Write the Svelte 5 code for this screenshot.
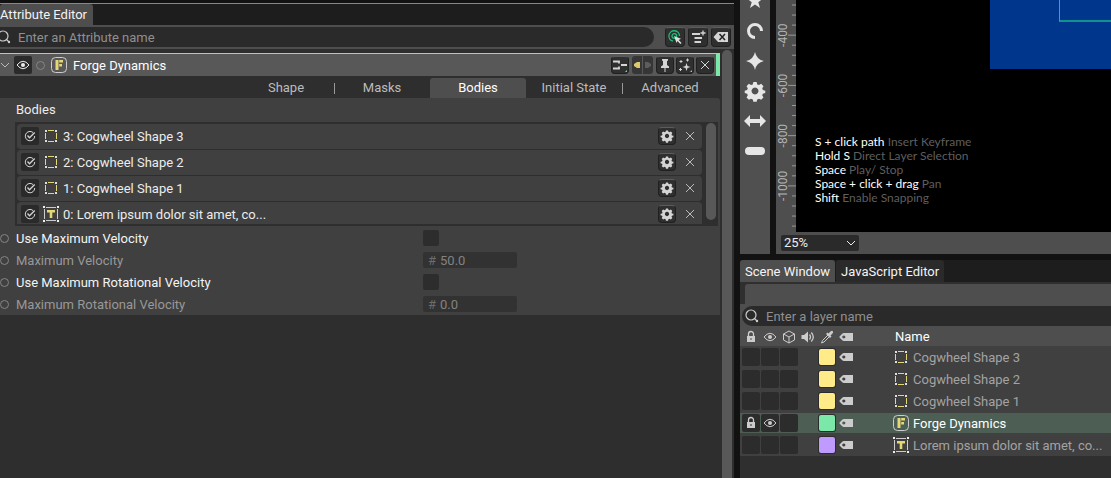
<script lang="ts">
  type Kind = 'shape' | 'text' | 'forge';

  interface Layer {
    name: string;
    kind: Kind;
    color: string;
    selected?: boolean;
  }

  const tabs = ['Shape', 'Masks', 'Bodies', 'Initial State', 'Advanced'];
  let activeTab = $state('Bodies');

  const bodies: { name: string; kind: Kind }[] = [
    { name: '3: Cogwheel Shape 3', kind: 'shape' },
    { name: '2: Cogwheel Shape 2', kind: 'shape' },
    { name: '1: Cogwheel Shape 1', kind: 'shape' },
    { name: '0: Lorem ipsum dolor sit amet, co...', kind: 'text' }
  ];

  const layers: Layer[] = [
    { name: 'Cogwheel Shape 3', kind: 'shape', color: '#ffeb87' },
    { name: 'Cogwheel Shape 2', kind: 'shape', color: '#ffeb87' },
    { name: 'Cogwheel Shape 1', kind: 'shape', color: '#ffeb87' },
    { name: 'Forge Dynamics', kind: 'forge', color: '#7be8a9', selected: true },
    { name: 'Lorem ipsum dolor sit amet, co...', kind: 'text', color: '#c09bff' }
  ];

  const hints = [
    ['S + click path', 'Insert Keyframe'],
    ['Hold S', 'Direct Layer Selection'],
    ['Space', 'Play/ Stop'],
    ['Space + click + drag', 'Pan'],
    ['Shift', 'Enable Snapping']
  ];

  const tools = ['star', 'arc', 'sparkle', 'gear', 'arrows', 'pill'];
  const columns = ['lock', 'eye', 'cube', 'audio', 'dropper', 'tag'];

  // One minor tick every 40 units, one label every 200
  const ticks = Array.from({ length: 23 }, (_, i) => ({
    y: 5 + i * 10.05,
    label: (i - 3) % 5 === 0 && i >= 3 ? String(-400 - ((i - 3) / 5) * 200) : ''
  }));

  const gear =
    'M-1.4-7.6h2.8l.5 2 1.5.6 1.8-1.1 2 2-1.1 1.8.6 1.5 2 .5v2l-2 .6-.6 1.4 1.1 1.8-2 2-1.8-1-1.5.6-.5 2h-2.8l-.5-2-1.5-.6-1.8 1-2-2 1.1-1.8-.6-1.4-2-.6v-2l2-.5.6-1.5-1.1-1.8 2-2 1.8 1.1 1.5-.6zM0-2.9a2.9 2.9 0 1 0 .01 0z';
</script>

{#snippet icon(name: string)}
  <svg class="icon" width="16" height="16" viewBox="0 0 16 16" aria-hidden="true">
    {#if name === 'shape'}
      <path d="M5 2.5h6M5 13.5h6M2.5 5v6M13.5 5v6" stroke="#e5d774" fill="none" />
      <path d="M2 2h2v2H2zM12 2h2v2h-2zM2 12h2v2H2zM12 12h2v2h-2z" fill="#ddd" />
    {:else if name === 'text'}
      <path d="M3 1.5h10M3 14.5h10M1.5 3v10M14.5 3v10" stroke="#ccc" fill="none" />
      <path d="M0 0h2v2H0zM14 0h2v2h-2zM0 14h2v2H0zM14 14h2v2h-2z" fill="#eee" />
      <path d="M4 4h8v2.5H9.3V12H6.7V6.5H4z" fill="#e5d774" />
    {:else if name === 'forge'}
      <rect x=".5" y=".5" width="15" height="15" rx="4" fill="none" stroke="#ccc" />
      <path d="M4.5 3h3v10h-3zM8.2 3H12v2.500H8.200zM8.200 7H11v2.500H8.200z" fill="#e5d774" />
    {:else if name === 'eye'}
      <path d="M2 8q6-7.5 12 0q-6 7.5-12 0z" fill="none" stroke="currentColor" />
      <circle cx="8" cy="8" r="2" fill="currentColor" />
    {:else if name === 'lock'}
      <path d="M5.5 7V5a2.5 2.5 0 0 1 5 0v2" fill="none" stroke="currentColor" stroke-width="1.3" />
      <path fill-rule="evenodd" d="M4 7h8v6H4zM7.5 9v2h1V9z" fill="currentColor" />
    {:else if name === 'cube'}
      <path d="M8 2l5.5 3v6L8 14l-5.5-3V5zM2.5 5L8 8l5.5-3M8 8v6" fill="none" stroke="currentColor" />
    {:else if name === 'audio'}
      <path d="M1.5 6h2.5l4-3.5v11L4 10H1.5z" fill="currentColor" />
      <path d="M9.5 5.5q2 2.5 0 5M11.3 3.5q4 4.5 0 9" fill="none" stroke="currentColor" stroke-width="1.3" />
    {:else if name === 'dropper'}
      <path d="M9 6L3.5 11.5 2.5 14l2.5-1L10.5 7.5" fill="none" stroke="currentColor" />
      <path d="M7 5l1.5-1.5 1 1L11.500 2.500q1.500-1.200 2.300-.3t-.3 2.300L11.500 6.500l1 1L11 9z" fill="currentColor" />
    {:else if name === 'tag'}
      <path
        fill-rule="evenodd"
        d="M6 4h9v8H6q-1.200 0-2-1L1.500 8.500v-1L4 5q.8-1 2-1zM5.800 6.400a1.600 1.600 0 1 0 .01 0z"
        fill="currentColor"
      />
    {:else if name === 'check'}
      <path d="M11 4.500A4.700 4.700 0 1 0 12.700 8" fill="none" stroke="currentColor" />
      <path d="M5.500 7.500L7.500 9.700L12.700 4.500" fill="none" stroke="currentColor" stroke-width="1.300" />
    {:else if name === 'gear'}
      <path transform="translate(8 8) scale(.74)" fill-rule="evenodd" d={gear} fill="currentColor" />
    {:else if name === 'close'}
      <path d="M4 4l8 8M12 4l-8 8" stroke="currentColor" />
    {:else if name === 'chevron'}
      <path d="M4 6l4 4 4-4" fill="none" stroke="currentColor" />
    {:else if name === 'search'}
      <circle cx="7" cy="7" r="5" fill="none" stroke="currentColor" stroke-width="1.200" />
      <path d="M10.500 10.500l3 3" stroke="currentColor" stroke-width="1.200" />
      <circle cx="13" cy="13" r="1.200" fill="currentColor" />
    {:else if name === 'target'}
      <path d="M12.500 7A5.300 5.300 0 1 0 6 12.200" fill="none" stroke="#1fbf7a" stroke-width="1.300" />
      <circle cx="7.300" cy="7" r="2.300" fill="none" stroke="#1fbf7a" stroke-width="1.300" />
      <path d="M7 7l7 2.700-2.300 1.200 2.800 3-1.200 1.100-2.800-3L9.500 14z" fill="#ddd" />
    {:else if name === 'levels'}
      <path d="M2 4h8v2H2zM4.500 8H12v2H4.500zM4.500 12H11v2H4.500z" fill="currentColor" />
      <path d="M13 1.500v5M10.500 4h5" stroke="currentColor" stroke-width="1.300" />
    {:else if name === 'erase'}
      <path d="M5 3h10v10H5L.5 8z" fill="currentColor" />
      <path d="M6.500 5l5.500 6M12 5l-5.500 6" stroke="#222" stroke-width="1.500" />
    {:else if name === 'connect'}
      <path d="M1 4.500h6v2M1 11.500h6v-2" fill="none" stroke="currentColor" stroke-width="1.800" />
      <path d="M9 7h6v2H9z" fill="currentColor" />
    {:else if name === 'pin'}
      <path d="M5 2h6v1.500l-1 .5v4l2 1.500V11H4V9.500L6 8V4l-1-.5zM7.500 11h1v4h-1z" fill="currentColor" />
    {:else if name === 'sparkles'}
      <path d="M9.500 6l1 3 3 1-3 1-1 3-1-3-3-1 3-1z" fill="currentColor" />
      <path d="M4 3v3M2.500 4.500h3M10.500 1.500v3M9 3h3M3.500 11v3M2 12.500h3" stroke="currentColor" />
    {/if}
  </svg>
{/snippet}

{#snippet tool(name: string)}
  <svg width="22" height="22" viewBox="-11 -11 22 22" fill="#e6e6e6" aria-hidden="true">
    {#if name === 'star'}
      <path d="M0-8L2-2.500H8L3.300 1.300 5 7 0 3.500-5 7-3.300 1.300-8-2.500H-2z" />
    {:else if name === 'arc'}
      <path d="M6.500 0A6.500 6.500 0 1 0 0 6.500" fill="none" stroke="#e6e6e6" stroke-width="3" />
    {:else if name === 'sparkle'}
      <path d="M0-9Q1.500-1.500 9 0 1.500 1.500 0 9-1.500 1.500-9 0-1.500-1.500 0-9z" />
    {:else if name === 'gear'}
      <path transform="scale(1.180)" fill-rule="evenodd" d={gear} />
    {:else if name === 'arrows'}
      <path d="M-11 0l6-6v4H5v-4l6 6-6 6V2H-5v4z" />
    {:else}
      <rect x="-10" y="-4" width="20" height="8" rx="4" />
    {/if}
  </svg>
{/snippet}

<div class="app">
  <section class="attributes">
    <div class="strip">
      <button class="strip-tab active">Attribute Editor</button>
    </div>

    <div class="attr-search">
      <label class="field">
        {@render icon('search')}
        <input type="text" placeholder="Enter an Attribute name" aria-label="Attribute name" />
      </label>
      <div class="search-actions">
        <button class="tool-btn large" aria-label="Pick target">{@render icon('target')}</button>
        <button class="tool-btn large" aria-label="Add level">{@render icon('levels')}</button>
        <button class="tool-btn large" aria-label="Clear">{@render icon('erase')}</button>
      </div>
    </div>

    <div class="scroll-area">
      <div class="panel">
        <header class="panel-head">
          <button class="bare" aria-label="Collapse">{@render icon('chevron')}</button>
          <button class="square" aria-label="Visibility">{@render icon('eye')}</button>
          <span class="ring"></span>
          {@render icon('forge')}
          <h2>Forge Dynamics</h2>
          <div class="head-actions">
            <button class="tool-btn corner" aria-label="Connections">{@render icon('connect')}</button>
            <span class="keys">
              <button aria-label="Previous key">
                <svg width="8" height="8" viewBox="0 0 8 8"><path d="M7 1v6H4L1 5V3l3-2z" fill="#dcc86c" /></svg>
              </button>
              <button aria-label="Next key">
                <svg width="8" height="8" viewBox="0 0 8 8"><path d="M1 1v6h3l3-2V3L4 1z" fill="#5d5d5d" /></svg>
              </button>
            </span>
            <button class="tool-btn" aria-label="Pin">{@render icon('pin')}</button>
            <button class="tool-btn corner" aria-label="Presets">{@render icon('sparkles')}</button>
            <button class="tool-btn" aria-label="Close">{@render icon('close')}</button>
          </div>
        </header>

        <nav class="tabs">
          {#each tabs as tab, i}
            <button
              class:active={tab === activeTab}
              class:divided={i === 1 || i === 4}
              onclick={() => (activeTab = tab)}>{tab}</button>
          {/each}
        </nav>

        <div class="content">
          <h3>Bodies</h3>
          <div class="list">
            <ul>
              {#each bodies as body}
                <li>
                  <button class="square" aria-label="Enabled">{@render icon('check')}</button>
                  {@render icon(body.kind)}
                  <span class="body-name">{body.name}</span>
                  <button class="tool-btn" aria-label="Settings">{@render icon('gear')}</button>
                  <button class="bare" aria-label="Remove">{@render icon('close')}</button>
                </li>
              {/each}
            </ul>
            <div class="thumb"></div>
          </div>

          <div class="attr">
            <span class="ring"></span>
            <label for="use-max">Use Maximum Velocity</label>
            <input id="use-max" type="checkbox" />
          </div>
          <div class="attr off">
            <span class="ring"></span>
            <label for="max">Maximum Velocity</label>
            <div class="number"><span>#</span><input id="max" type="text" value="50.0" disabled /></div>
          </div>
          <div class="attr">
            <span class="ring"></span>
            <label for="use-max-rot">Use Maximum Rotational Velocity</label>
            <input id="use-max-rot" type="checkbox" />
          </div>
          <div class="attr off">
            <span class="ring"></span>
            <label for="max-rot">Maximum Rotational Velocity</label>
            <div class="number"><span>#</span><input id="max-rot" type="text" value="0.0" disabled /></div>
          </div>
        </div>
      </div>
      <div class="scrollbar"></div>
    </div>
  </section>

  <div class="side">
    <section class="viewer">
      <div class="toolbar">
        {#each tools as name}
          <button aria-label={name}>{@render tool(name)}</button>
        {/each}
      </div>
      <div class="viewport">
        <div class="stage">
          <svg class="ruler" width="20" height="232" viewBox="0 0 20 232">
            {#each ticks as tick}
              <path d="M{tick.label ? 12 : 16} {tick.y}H20" stroke="#999" />
              {#if tick.label}
                <text transform="translate(11 {tick.y}) rotate(-90)" text-anchor="middle">{tick.label}</text>
              {/if}
            {/each}
          </svg>
          <div class="canvas">
            <div class="backdrop"><div class="outline"></div></div>
            <div class="hints">
              {#each hints as [keys, action]}
                <div><b>{keys}</b> {action}</div>
              {/each}
            </div>
          </div>
        </div>
        <div class="zoom-bar">
          <label class="zoom">
            <select aria-label="Zoom">
              <option>25%</option>
            </select>
            {@render icon('chevron')}
          </label>
        </div>
      </div>
    </section>

    <section class="scene">
      <div class="strip">
        <button class="strip-tab active">Scene Window</button>
        <button class="strip-tab">JavaScript Editor</button>
      </div>
      <div class="track"><div></div></div>
      <div class="layer-search">
        <label class="field">
          {@render icon('search')}
          <input type="text" placeholder="Enter a layer name" aria-label="Layer name" />
        </label>
      </div>
      <table>
        <thead>
          <tr>
            {#each columns as column}
              <th class="cell" aria-label={column}>{@render icon(column)}</th>
            {/each}
            <th class="name">Name</th>
          </tr>
        </thead>
        <tbody>
          {#each layers as layer}
            <tr class:selected={layer.selected}>
              <td class="cell"><span class="box">{#if layer.selected}{@render icon('lock')}{/if}</span></td>
              <td class="cell"><span class="box">{#if layer.selected}{@render icon('eye')}{/if}</span></td>
              <td class="cell"><span class="box"></span></td>
              <td class="cell"></td>
              <td class="cell"><span class="swatch" style:background={layer.color}></span></td>
              <td class="cell">{@render icon('tag')}</td>
              <td class="name">
                <span class="layer">{@render icon(layer.kind)}<span>{layer.name}</span></span>
              </td>
            </tr>
          {/each}
        </tbody>
      </table>
    </section>
  </div>
</div>

<style>
  :global(body) {
    background: #111;
    overflow: hidden;
  }

  .app {
    display: grid;
    grid-template-columns: minmax(0, 734fr) minmax(0, 371fr);
    gap: 6px;
    min-height: 100vh;
    background: #121212;
    color: #ececec;
    font: 13px/16px Roboto, sans-serif;
  }

  .app * {
    box-sizing: border-box;
  }

  button {
    display: flex;
    align-items: center;
    justify-content: center;
    flex: none;
    padding: 0;
    border: 0;
    background: none;
    color: inherit;
    font: inherit;
  }

  input,
  select {
    min-width: 0;
    margin: 0;
    padding: 0;
    border: 0;
    outline: 0;
    background: none;
    color: inherit;
    font: inherit;
  }

  h2,
  h3 {
    margin: 0;
    font-size: 13px;
    font-weight: 400;
  }

  svg {
    display: block;
    flex: none;
  }

  .strip {
    display: flex;
    gap: 1px;
    height: 22px;
    background: #1d1d1d;
  }

  .strip-tab {
    padding: 2px 5px 0;
    border-radius: 3px 3px 0 0;
    background: #2a2a2a;
    color: #f4f4f4;
  }

  .strip-tab.active {
    background: #4e4e4e;
  }

  .field {
    display: flex;
    align-items: center;
    flex: 1;
    gap: 6px;
    height: 20px;
    background: #2a2a2a;
    color: #ccc;
  }

  .field input {
    flex: 1;
    padding-top: 2px;
  }

  .field input::placeholder {
    color: #8f8f8f;
    opacity: 1;
  }

  .tool-btn {
    position: relative;
    width: 18px;
    height: 18px;
    border: 1px solid #202020;
    border-top-color: #5c5c5c;
    border-radius: 4px;
    background: #2f2f2f;
    color: #d4d4d4;
  }

  .tool-btn.large {
    width: 20px;
    height: 20px;
  }

  .tool-btn.corner::after {
    content: '';
    position: absolute;
    right: 1px;
    bottom: 1px;
    border: 1px solid #70dca5;
    border-top-color: transparent;
    border-left-color: transparent;
  }

  .square {
    width: 18px;
    height: 18px;
    border-radius: 2px;
    background: #2a2a2a;
  }

  .bare {
    width: 18px;
    height: 18px;
    color: #bbb;
  }

  .ring {
    flex: none;
    width: 9px;
    height: 9px;
    border: 1px solid #858585;
    border-radius: 50%;
  }

  /* Attribute editor */
  .attributes {
    display: flex;
    flex-direction: column;
    margin-top: 3px;
    border-top: 1px solid #25bd76;
    background: #2e2e2e;
  }

  .attributes .strip {
    height: 21px;
  }

  .attributes .strip-tab {
    padding: 0 6px 0 0;
  }

  .attr-search {
    display: flex;
    align-items: center;
    gap: 11px;
    height: 24px;
    padding-right: 3px;
    background: #4e4e4e;
  }

  .attr-search .field {
    border-radius: 0 10px 10px 0;
  }

  .attr-search .field .icon {
    margin-left: -4px;
  }

  .search-actions {
    display: flex;
    gap: 3px;
  }

  .scroll-area {
    display: flex;
    flex: 1;
    gap: 2px;
    padding-right: 2px;
  }

  .panel {
    flex: 1;
    min-width: 0;
    margin-top: 4px;
  }

  .scrollbar {
    width: 10px;
    margin-top: 1px;
    border-radius: 5px 5px 0 0;
    background: #585858;
  }

  .panel-head {
    display: flex;
    align-items: center;
    height: 23px;
    border-top: 1px solid #7be8a9;
    border-right: 4px solid #7be8a9;
    background: #585858;
  }

  .panel-head > .bare {
    width: 14px;
    padding-right: 5px;
  }

  .panel-head > .ring {
    margin: 0 6px 0 4px;
  }

  .panel-head h2 {
    margin-left: 6px;
    padding-top: 2px;
    color: #fff;
  }

  .head-actions {
    display: flex;
    gap: 2px;
    margin-left: auto;
    padding-right: 2px;
  }

  .keys {
    display: flex;
    gap: 1px;
    width: 21px;
    margin: 0 1px;
    overflow: hidden;
    border-radius: 3px;
  }

  .keys button {
    flex: 1;
    height: 18px;
    background: #363636;
  }

  .tabs {
    display: flex;
    justify-content: flex-end;
    height: 22px;
    padding-right: 2px;
    color: #bcbcbc;
  }

  .tabs button {
    position: relative;
    width: 96px;
    margin-top: 2px;
    border-radius: 3px 3px 0 0;
  }

  .tabs .active {
    background: #4e4e4e;
    color: #fff;
  }

  .tabs .divided::before {
    content: '';
    position: absolute;
    left: 0;
    width: 1px;
    height: 11px;
    background: #999;
  }

  .content {
    border-radius: 0 3px 0 0;
    background: #404040;
  }

  .content h3 {
    padding: 4px 16px;
  }

  .list {
    display: flex;
    gap: 4px;
    height: 104px;
    margin: 0 2px 1px 15px;
    padding: 0 2px 2px;
    background: #2e2e2e;
  }

  .list ul {
    flex: 1;
    min-width: 0;
    margin: 0;
    padding: 2px 0 0;
    overflow: hidden;
    list-style: none;
  }

  .list li {
    display: flex;
    align-items: center;
    height: 25px;
    margin-bottom: 1px;
    padding: 0 3px 1px 4px;
    border-radius: 4px;
    background: #404040;
  }

  .list li .square {
    margin-right: 4px;
  }

  .list li .icon {
    color: #d4d4d4;
  }

  .list li .bare .icon {
    color: #bbb;
  }

  .body-name {
    flex: 1;
    margin-left: 4px;
    padding-top: 2px;
  }

  .list li .bare {
    margin-left: 5px;
  }

  .thumb {
    width: 10px;
    height: 97px;
    margin-top: 1px;
    border-radius: 5px;
    background: #585858;
  }

  .attr {
    display: flex;
    align-items: center;
    height: 22px;
    color: #f4f4f4;
  }

  .attr label {
    width: 407px;
    margin-left: 7px;
    padding-top: 2px;
  }

  .attr > input {
    appearance: none;
    width: 16px;
    height: 16px;
    border-radius: 2px;
    background: #2d2d2d;
  }

  .attr.off {
    color: #989898;
  }

  .number {
    display: flex;
    align-items: center;
    gap: 4px;
    width: 94px;
    height: 16px;
    padding: 1px 5px 0;
    border-radius: 2px;
    background: #323232;
    color: #828282;
  }

  .number span {
    color: #6c6c6c;
  }

  .number input {
    flex: 1;
  }

  /* Viewer */
  .side {
    display: flex;
    flex-direction: column;
    gap: 6px;
    min-width: 0;
  }

  .viewer {
    display: flex;
    gap: 6px;
    height: 254px;
  }

  .toolbar {
    display: flex;
    flex-direction: column;
    justify-content: flex-end;
    width: 30px;
    padding-bottom: 88px;
    overflow: hidden;
    background: #505050;
  }

  .toolbar button {
    width: 30px;
    height: 30px;
  }

  .viewport {
    display: flex;
    flex: 1;
    flex-direction: column;
    background: #4e4e4e;
  }

  .stage {
    display: flex;
  }

  .ruler text {
    fill: #b4b4b4;
    font-size: 12px;
  }

  .canvas {
    position: relative;
    flex: 1;
    overflow: hidden;
    background: #000;
  }

  .backdrop {
    position: absolute;
    top: 0;
    right: 0;
    left: 194px;
    height: 69px;
    background: #01368d;
  }

  .outline {
    height: 22px;
    margin-left: 69px;
    border-bottom: 2px solid #10938c;
    border-left: 1px solid #1fb98c;
  }

  .hints {
    position: absolute;
    bottom: 27px;
    left: 19px;
    color: #5e5e5e;
    font: 12px/14px Lato, sans-serif;
  }

  .hints b {
    color: #fff;
    font-weight: 400;
  }

  .zoom-bar {
    padding: 3px 5px;
  }

  .zoom {
    display: flex;
    align-items: center;
    width: 78px;
    height: 16px;
    padding-left: 3px;
    border-radius: 2px;
    background: #2a2a2a;
  }

  .zoom select {
    flex: 1;
    appearance: none;
  }

  /* Scene window */
  .scene {
    flex: 1;
    background: #2f2f2f;
  }

  .track {
    padding: 2px 0 0 5px;
  }

  .track div {
    height: 20px;
    border-radius: 3px 0 0 0;
    background: #4e4e4e;
  }

  .layer-search {
    display: flex;
    padding: 2px 0 0 2px;
    background: #4e4e4e;
  }

  .layer-search .field {
    padding-left: 2px;
    border-radius: 10px 0 0 10px;
  }

  table {
    width: 100%;
    border-collapse: collapse;
    table-layout: fixed;
    background: #404040;
    color: #a3a3a3;
  }

  thead tr {
    height: 20px;
    background: #4e4e4e;
    color: #ccc;
  }

  tbody tr {
    height: 22px;
  }

  th,
  td {
    padding: 0;
    text-align: left;
  }

  th {
    padding-top: 2px;
  }

  .cell {
    width: 19px;
    padding-left: 1px;
    color: #ccc;
  }

  .cell:first-child {
    width: 21px;
    padding-left: 2px;
  }

  .cell:first-child .icon {
    margin-left: 1px;
  }

  td .box {
    display: flex;
    align-items: center;
    width: 18px;
    height: 18px;
    margin-left: -1px;
    padding-left: 1px;
    border-radius: 2px;
    background: #2c2c2c;
  }

  td:first-child .box {
    margin-left: 0;
    padding-left: 0;
  }

  .swatch {
    display: block;
    width: 16px;
    height: 16px;
    border-radius: 2px;
    box-shadow: 0 0 0 1px #2c2c2c;
  }

  .name {
    padding-left: 37px;
  }

  th.name {
    padding-left: 39px;
    color: #fff;
    font-weight: 400;
  }

  .layer {
    display: flex;
    align-items: center;
    gap: 4px;
    white-space: nowrap;
  }

  .layer span {
    padding-top: 2px;
  }

  .selected {
    background: linear-gradient(#404040 1px, #4d5f54 1px, #4d5f54 21px, #404040 21px);
    color: #fff;
  }
</style>
